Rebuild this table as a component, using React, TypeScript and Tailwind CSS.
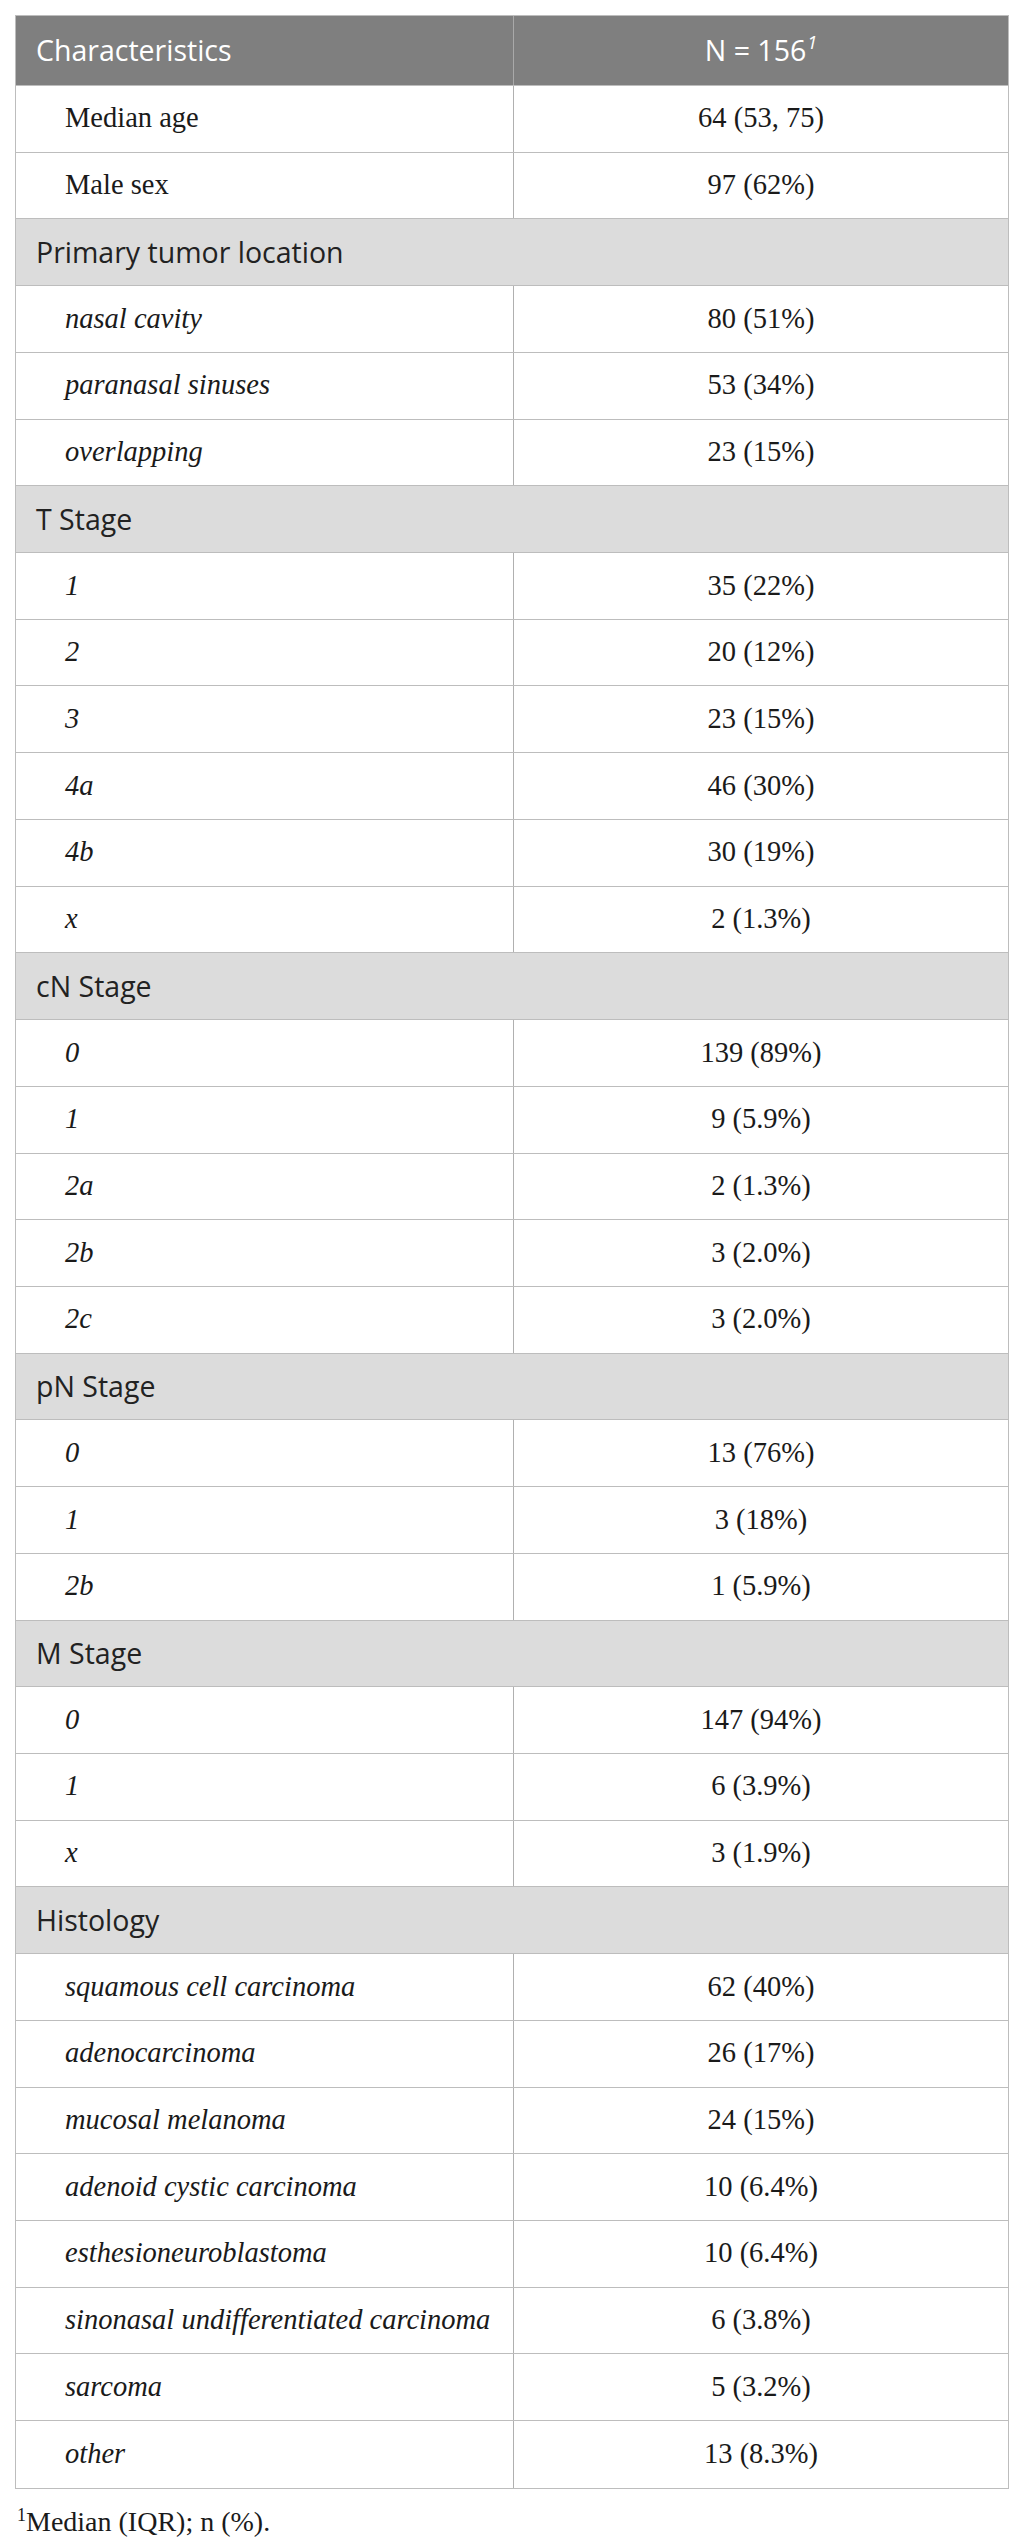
import React from "react";

type Row = { label: string; value?: string; section?: boolean; italic?: boolean };

const rows: Row[] = [
  { label: "Median age", value: "64 (53, 75)" },
  { label: "Male sex", value: "97 (62%)" },
  { label: "Primary tumor location", section: true },
  { label: "nasal cavity", value: "80 (51%)", italic: true },
  { label: "paranasal sinuses", value: "53 (34%)", italic: true },
  { label: "overlapping", value: "23 (15%)", italic: true },
  { label: "T Stage", section: true },
  { label: "1", value: "35 (22%)", italic: true },
  { label: "2", value: "20 (12%)", italic: true },
  { label: "3", value: "23 (15%)", italic: true },
  { label: "4a", value: "46 (30%)", italic: true },
  { label: "4b", value: "30 (19%)", italic: true },
  { label: "x", value: "2 (1.3%)", italic: true },
  { label: "cN Stage", section: true },
  { label: "0", value: "139 (89%)", italic: true },
  { label: "1", value: "9 (5.9%)", italic: true },
  { label: "2a", value: "2 (1.3%)", italic: true },
  { label: "2b", value: "3 (2.0%)", italic: true },
  { label: "2c", value: "3 (2.0%)", italic: true },
  { label: "pN Stage", section: true },
  { label: "0", value: "13 (76%)", italic: true },
  { label: "1", value: "3 (18%)", italic: true },
  { label: "2b", value: "1 (5.9%)", italic: true },
  { label: "M Stage", section: true },
  { label: "0", value: "147 (94%)", italic: true },
  { label: "1", value: "6 (3.9%)", italic: true },
  { label: "x", value: "3 (1.9%)", italic: true },
  { label: "Histology", section: true },
  { label: "squamous cell carcinoma", value: "62 (40%)", italic: true },
  { label: "adenocarcinoma", value: "26 (17%)", italic: true },
  { label: "mucosal melanoma", value: "24 (15%)", italic: true },
  { label: "adenoid cystic carcinoma", value: "10 (6.4%)", italic: true },
  { label: "esthesioneuroblastoma", value: "10 (6.4%)", italic: true },
  { label: "sinonasal undifferentiated carcinoma", value: "6 (3.8%)", italic: true },
  { label: "sarcoma", value: "5 (3.2%)", italic: true },
  { label: "other", value: "13 (8.3%)", italic: true },
];

export default function App() {
  return (
    <div className="bg-white w-[1025px] min-h-[2547px] pt-[15px] pl-[15px]">
      <div className="w-[994px] border border-[#bdbdbd]">
        <div className="flex h-[70px] bg-[#7f7f7f] text-white border-b border-[#bdbdbd] font-['Open_Sans',sans-serif] text-[28.5px]">
          <div className="w-[498px] border-r border-[#a9a9a9] flex items-center pl-[20px]">Characteristics</div>
          <div className="flex-1 flex items-center justify-center">
            <span>
              N = 156<span className="italic text-[18px] relative top-[-12px] ml-[1px]">1</span>
            </span>
          </div>
        </div>
        {rows.map((r, i) =>
          r.section ? (
            <div
              key={i}
              className="flex items-center h-[66.72px] bg-[#dcdcdc] border-b border-[#bdbdbd] last:border-b-0 pl-[20px] font-['Open_Sans',sans-serif] text-[28.5px] text-[#222]"
            >
              {r.label}
            </div>
          ) : (
            <div key={i} className="flex h-[66.72px] border-b border-[#bdbdbd] last:border-b-0 text-[#1a1a1a] font-['Liberation_Serif',serif] text-[28.5px]">
              <div className={"w-[498px] border-r border-[#b0b0b0] flex items-center pl-[49px] " + (r.italic ? "italic" : "")}>
                {r.label}
              </div>
              <div className="flex-1 flex items-center justify-center">{r.value}</div>
            </div>
          )
        )}
      </div>
      <div className="mt-[15px] ml-[2px] font-['Liberation_Serif',serif] text-[28px] text-[#1a1a1a] leading-[36px]">
        <span className="text-[18px] relative top-[-10px]">1</span>Median (IQR); n (%).
      </div>
    </div>
  );
}
